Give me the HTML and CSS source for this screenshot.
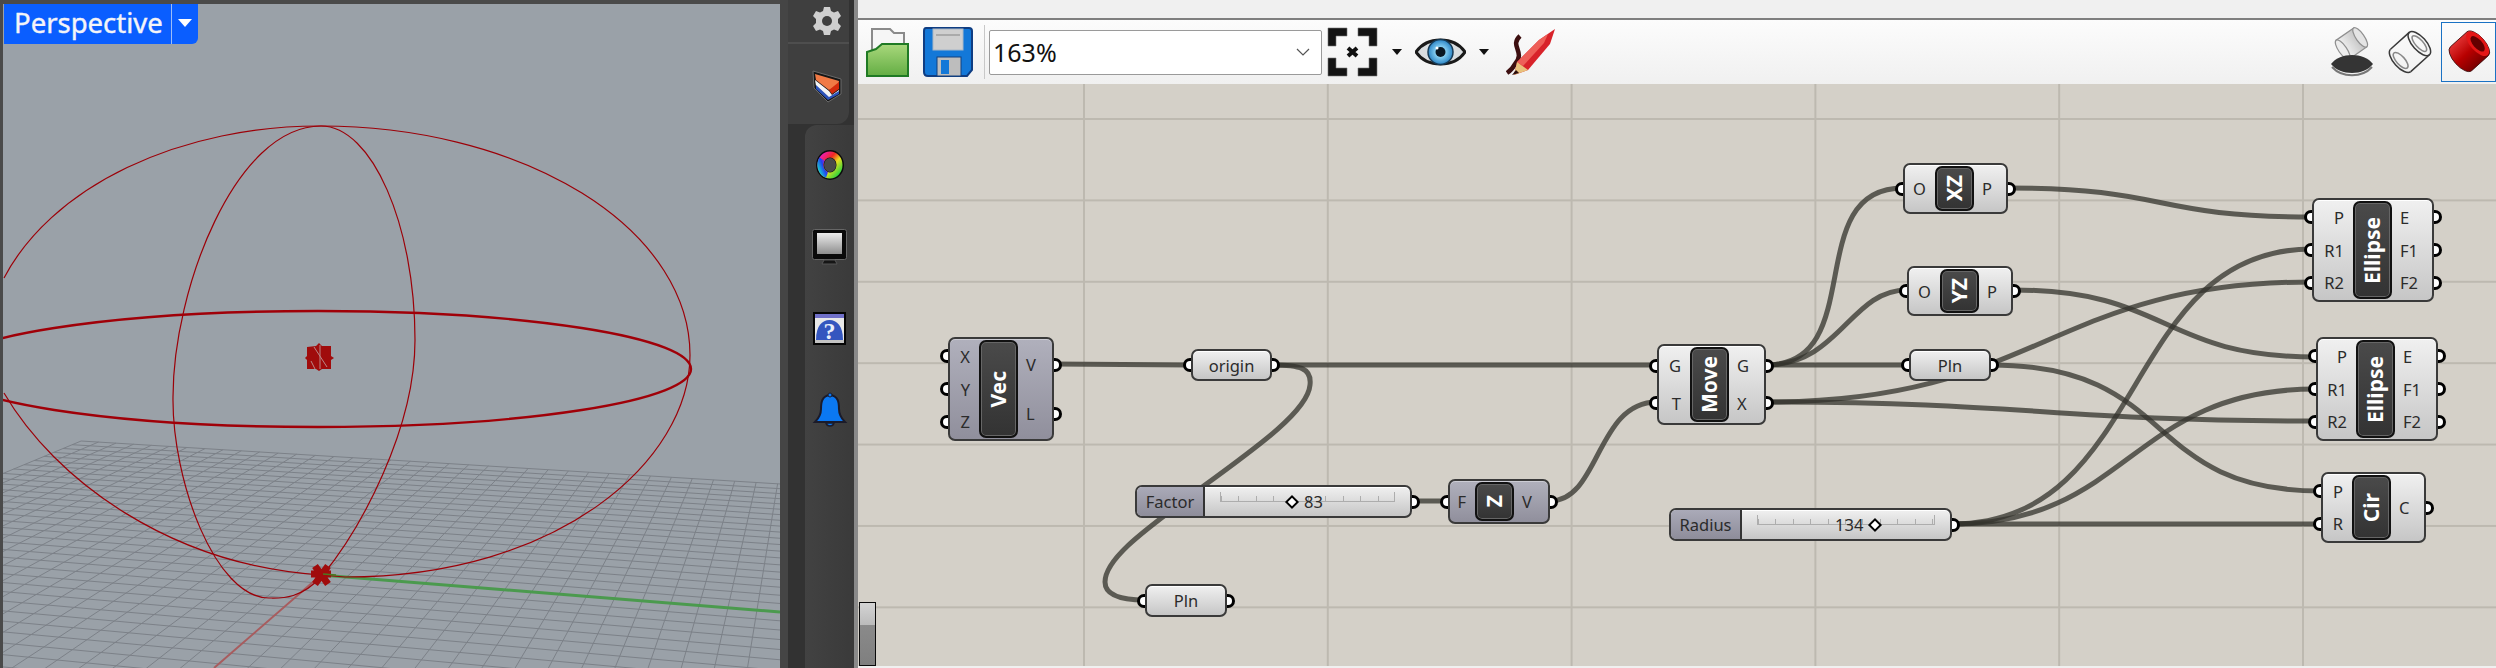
FILE: index.html
```html
<!DOCTYPE html>
<html lang="en">
<head>
  <meta charset="UTF-8" />
  <title>Perspective and canvas</title>
  <link rel="stylesheet" href="styles.css">
</head>
<body>
  <div class="app">

    <!-- rhino viewport -->
    <section class="viewport">
      <svg class="scene" viewBox="3 4 777 664" width="777" height="664">
        <g id="grid" class="grid-lines"></g>
        <line class="axis-x" x1="321" y1="575" x2="214" y2="668" />
        <line class="axis-y" x1="321" y1="575" x2="780" y2="612" />
        <g class="curve">
          <path d="M321 126 A369 229 0 0 1 690 355 C690 460 560 577 345 577 L321 575" />
          <path d="M321 126 A335 229 0 0 0 4 278" />
          <path d="M4 393 C55 480 170 565 321 575" />
          <path d="M321 126 C372 126 415 225 415 340 C415 430 360 530 322 576 C300 600 280 598 269 598 C215 598 172 480 173 397 C173 290 235 126 321 126 Z" />
        </g>
        <ellipse class="equator" cx="318" cy="369" rx="373" ry="58" />
        <path class="marker" d="M307 347 L316 346 L319 343 L322 346 L331 346 L331 356 L334 358 L331 360 L331 369 L322 369 L319 371 L316 369 L307 369 L307 360 L305 358 L307 356 Z" />
        <path class="marker-lines" d="M314 347 L327 367 M320 345 L320 369 M311 361 L315 369" />
        <path class="cross" d="M315 566 L328 584 M328 566 L315 584 M311 574 L331 574" />
        <line class="cross-tip" x1="323" y1="574" x2="336" y2="575" />
      </svg>
      <div class="view-tab">
        <span class="view-name">Perspective</span>
        <span class="view-drop"><i></i></span>
      </div>
    </section>

    <!-- dark side strip -->
    <aside class="strip">
      <div class="strip-top">
        <div class="strip-gear">
          <svg width="28" height="30" viewBox="0 0 28 30">
            <path fill="#cfcfcf" d="M11 1h6l1 4 3 1.500 4-1.500 3 5-3 3v4l3 3-3 5-4-1.500-3 1.500-1 4h-6l-1-4-3-1.500-4 1.500-3-5 3-3v-4l-3-3 3-5 4 1.500 3-1.500z" />
            <circle cx="14" cy="15" r="5" fill="#3f3f3f" />
          </svg>
        </div>
        <div class="strip-slot">
          <svg width="30" height="33" viewBox="0 0 30 33">
            <path fill="#161616" stroke="#6a6a6a" d="M1 1 L29 9 L29 24 L16 32 L2 18 Z" />
            <path fill="#f07a45" d="M3 4 L27 11 L26 16 L17 20 L4 10 Z" />
            <path fill="#d42a0c" d="M17 20 L27 12 L27 19 L20 24 Z" />
            <path fill="#f4f4f4" d="M3 10 L17 21 L20 25 L27 20 L27 22 L17 28 L4 16 Z" />
            <path fill="#2b52b8" d="M4 15 L17 27 L27 21 L27 24 L16 30 L4 19 Z" />
          </svg>
        </div>
      </div>
      <div class="strip-panel">
        <svg width="30" height="32" viewBox="0 0 30 32">
          <defs>
            <linearGradient id="wheelA" x1="0" y1="0" x2="1" y2="1">
              <stop offset="0" stop-color="#f01ac0" />
              <stop offset=".35" stop-color="#f02a20" />
              <stop offset=".6" stop-color="#e6e020" />
              <stop offset="1" stop-color="#18d040" />
            </linearGradient>
            <linearGradient id="wheelB" x1="0" y1="1" x2="1" y2="0">
              <stop offset="0" stop-color="#18d0d0" />
              <stop offset=".5" stop-color="#2040f0" />
              <stop offset="1" stop-color="#f01ac0" />
            </linearGradient>
          </defs>
          <ellipse cx="15" cy="16" rx="14" ry="15" fill="#0c0c0c" />
          <ellipse cx="15" cy="16" rx="9.500" ry="10.500" fill="none" stroke="url(#wheelA)" stroke-width="6" />
          <path d="M7 10 A 9.500 10.500 0 0 0 12 26" fill="none" stroke="url(#wheelB)" stroke-width="6" />
          <ellipse cx="15" cy="16" rx="6" ry="7" fill="#4a4a4a" />
        </svg>
        <svg width="35" height="36" viewBox="0 0 35 36">
          <defs>
            <linearGradient id="screenFill" x1="0" y1="0" x2="0" y2="1">
              <stop offset="0" stop-color="#ececec" />
              <stop offset="1" stop-color="#8e8e8e" />
            </linearGradient>
          </defs>
          <rect x=".5" y=".5" width="34" height="30" rx="2" fill="#0a0a0a" stroke="#666" />
          <rect x="5" y="4" width="25" height="21" fill="url(#screenFill)" />
          <path d="M12 31h11l2 4H10z" fill="#151515" stroke="#555" />
        </svg>
        <svg width="33" height="33" viewBox="0 0 33 33">
          <rect x="1" y="1" width="31" height="31" fill="#e8e8e8" stroke="#050505" stroke-width="2" />
          <rect x="2" y="2" width="29" height="4" fill="#7070c8" />
          <path d="M3 28 C3 14 9 8 16.500 8 C24 8 30 14 30 28 Z" fill="#3456bf" />
          <text class="help-mark" x="16.500" y="27">?</text>
          <rect x="2" y="28" width="29" height="3" fill="#c4c4c4" />
        </svg>
        <svg width="36" height="36" viewBox="0 0 36 36">
          <path fill="#0b78f2" stroke="#1b1b2a" stroke-width="2" d="M18 3 C10 4 9 10 9 17 C9 23 7 26 3 30 H33 C29 26 27 23 27 17 C27 10 26 4 18 3 Z" />
          <path fill="#0b78f2" stroke="#1b1b2a" stroke-width="1.500" d="M14 31 C15 35 21 35 22 31 Z" />
          <circle cx="18" cy="3" r="2" fill="#0b78f2" stroke="#1b1b2a" />
        </svg>
      </div>
    </aside>

    <!-- grasshopper window -->
    <main class="window">
      <div class="title-strip"></div>
      <div class="toolbar">
        <svg class="tool-open" width="43" height="50" viewBox="0 0 43 50">
          <defs>
            <linearGradient id="openGreen" x1="0" y1="0" x2="0" y2="1">
              <stop offset="0" stop-color="#a9d87c" />
              <stop offset="1" stop-color="#63ad43" />
            </linearGradient>
          </defs>
          <path d="M6 24 V2 H24 L28 6 H38 V24" fill="#f6f6f6" stroke="#8a8a8a" stroke-width="2" />
          <path d="M1 49 V25 L10 22 L16 17 H42 V49 Z" fill="url(#openGreen)" stroke="#1f7a24" stroke-width="2" />
        </svg>
        <svg class="tool-save" width="50" height="50" viewBox="0 0 50 50">
          <path d="M3 1 H46 Q49 1 49 4 V43 L44 49 H5 Q1 49 1 45 V4 Q1 1 3 1 Z" fill="#1378d8" stroke="#0f3d82" stroke-width="2" />
          <rect x="10" y="2" width="30" height="21" fill="#cfcfcf" stroke="#a9b7c6" />
          <rect x="13" y="7" width="24" height="2" fill="#aaa" />
          <rect x="14" y="30" width="24" height="19" fill="#bdbdbd" stroke="#12407f" />
          <rect x="18" y="33" width="8" height="14" fill="#1378d8" />
        </svg>
        <span class="tool-sep"></span>
        <div class="zoom-box">
          <span>163%</span>
          <svg width="14" height="8" viewBox="0 0 14 8"><path d="M1 1 L7 7 L13 1" fill="none" stroke="#555" stroke-width="1.200" /></svg>
        </div>
        <svg class="tool-focus" width="51" height="50" viewBox="0 0 51 50">
          <path d="M1 19 V1 H20 V9 H9 V19 Z M31 1 H50 V19 H42 V9 H31 Z M1 31 H9 V41 H20 V49 H1 Z M42 31 H50 V49 H31 V41 H42 Z" fill="#141414" stroke="#777" stroke-width=".6" />
          <path d="M21 21 L30 29 M30 21 L21 29" stroke="#111" stroke-width="4" />
        </svg>
        <i class="drop-arrow"></i>
        <svg class="tool-eye" width="51" height="32" viewBox="0 0 51 32">
          <defs>
            <radialGradient id="irisFill">
              <stop offset=".35" stop-color="#8fd6f6" />
              <stop offset="1" stop-color="#2a83c4" />
            </radialGradient>
          </defs>
          <path d="M1 16 C12 0 39 0 50 16 C39 32 12 32 1 16 Z" fill="#d9dde0" stroke="#1a1a1a" stroke-width="3" />
          <circle cx="25.500" cy="16" r="12.500" fill="url(#irisFill)" stroke="#173a55" stroke-width="1.500" />
          <circle cx="25.500" cy="16" r="5" fill="#0a1722" />
          <circle cx="22" cy="12" r="1.500" fill="#fff" />
        </svg>
        <i class="drop-arrow"></i>
        <svg class="tool-pencil" width="50" height="48" viewBox="0 0 50 48">
          <path d="M14 8 C3 18 20 24 9 36 C7 40 4 43 1 45" fill="none" stroke="#3d0f10" stroke-width="4.500" />
          <path d="M11 34 L33 12 L49 1 L44 16 L22 42 L8 47 Z" fill="#d8232a" />
          <path d="M11 34 L33 12 L42 6 L38 15 L17 38 Z" fill="#ee5f58" />
          <path d="M11 34 L22 42 L8 47 Z" fill="#e9c27c" />
          <path d="M10 42 L13 45 L6 47 Z" fill="#2a0d0d" />
        </svg>
        <span class="tool-gap"></span>
        <svg class="tool-ghost" width="44" height="50" viewBox="0 0 44 50">
          <defs>
            <linearGradient id="ghostFill" x1="0" y1="0" x2="1" y2="0">
              <stop offset="0" stop-color="#f4f4f4" />
              <stop offset="1" stop-color="#c0c0c0" />
            </linearGradient>
          </defs>
          <g transform="rotate(-35 22 16) translate(4 3) scale(.82)">
            <rect x="8" y="2" width="26" height="28" fill="url(#ghostFill)" stroke="#8f8f8f" stroke-width="1.500" />
            <ellipse cx="8" cy="16" rx="5" ry="14" fill="#ededed" stroke="#8f8f8f" stroke-width="1.500" />
            <ellipse cx="34" cy="16" rx="5" ry="14" fill="#e4e4e4" stroke="#8f8f8f" stroke-width="1.500" />
          </g>
          <path d="M1 37 C10 25 34 25 43 37 C34 49 10 49 1 37 Z" fill="#343434" />
          <path d="M2 40 C12 51 32 51 42 40" fill="none" stroke="#777" stroke-width="2" />
        </svg>
        <svg class="tool-wire" width="51" height="50" viewBox="0 0 51 50">
          <g transform="rotate(-42 25 25) translate(4 4) scale(.84)" fill="none" stroke="#3a3a3a" stroke-width="1.800">
            <path d="M10 7 H40 M10 43 H40" />
            <ellipse cx="40" cy="25" rx="8" ry="18" />
            <ellipse cx="40" cy="25" rx="4.500" ry="12" stroke="#888" />
            <path d="M10 7 A8 18 0 0 0 10 43" />
            <path d="M10 13 A5 12 0 0 1 10 37 A5 12 0 0 1 10 13" stroke="#888" />
          </g>
        </svg>
        <div class="tool-active">
          <svg width="50" height="50" viewBox="0 0 50 50">
            <defs>
              <linearGradient id="redFill" x1="0" y1="0" x2="0" y2="1">
                <stop offset="0" stop-color="#e03030" />
                <stop offset=".5" stop-color="#b80000" />
                <stop offset="1" stop-color="#7a0000" />
              </linearGradient>
            </defs>
            <g transform="rotate(-42 25 25) translate(5 4) scale(.8)">
              <path d="M11 5 H39 A9 20 0 0 1 39 45 H11 A9 20 0 0 1 11 5 Z" fill="url(#redFill)" stroke="#3a0a0a" stroke-width="1" />
              <ellipse cx="39" cy="25" rx="9" ry="19" fill="#e41616" />
              <ellipse cx="39" cy="25" rx="5.500" ry="12" fill="#640000" />
            </g>
          </svg>
        </div>
      </div>

      <div class="canvas">
        <svg class="wires" viewBox="858 84 1638 584" width="1638" height="584">
          <path d="M1054 364 L1191 365" />
          <path d="M1272 365 L1657 365" />
          <path d="M1272 365 C1300 365 1312 368 1310 385 C1308 410 1260 445 1205 485 C1160 520 1105 555 1105 582 C1105 597 1125 600 1145 600" />
          <path d="M1412 501 L1448 501" />
          <path d="M1550 501 C1600 501 1596 402 1657 402" />
          <path d="M1766 365 C1870 365 1800 188 1903 188" />
          <path d="M1766 365 C1840 365 1850 290 1907 290" />
          <path d="M1766 365 L1909 365" />
          <path d="M1766 402 C2040 402 2050 282 2312 282" />
          <path d="M1766 402 C2030 402 2050 421 2316 421" />
          <path d="M1991 365 C2180 365 2140 491 2321 491" />
          <path d="M2008 188 C2170 188 2150 217 2312 217" />
          <path d="M2013 290 C2170 290 2160 357 2316 357" />
          <path d="M1952 524 C2150 524 2120 249 2312 249" />
          <path d="M1952 524 C2130 524 2130 389 2316 389" />
          <path d="M1952 524 L2321 524" />
        </svg>

        <div class="node comp off n-vec">
          <div class="col in"><div class="row">X<i class="port l"></i></div><div class="row">Y<i class="port l"></i></div><div class="row">Z<i class="port l"></i></div></div>
          <div class="pill"><span>Vec</span></div>
          <div class="col out"><div class="row">V<i class="port r"></i></div><div class="row">L<i class="port r"></i></div></div>
        </div>

        <div class="node param n-origin"><i class="port l"></i>origin<i class="port r"></i></div>

        <div class="node slider n-factor">
          <div class="slider-name">Factor</div>
          <div class="track"><div class="rail"><div class="grip grip-factor"><i class="diamond"></i><span>83</span></div></div></div>
          <i class="port r"></i>
        </div>

        <div class="node comp off n-z">
          <div class="col in"><div class="row">F<i class="port l"></i></div></div>
          <div class="pill"><span>Z</span></div>
          <div class="col out"><div class="row">V<i class="port r"></i></div></div>
        </div>

        <div class="node param n-pln-low"><i class="port l"></i>Pln<i class="port r"></i></div>

        <div class="node comp n-move">
          <div class="col in"><div class="row">G<i class="port l"></i></div><div class="row">T<i class="port l"></i></div></div>
          <div class="pill"><span>Move</span></div>
          <div class="col out"><div class="row">G<i class="port r"></i></div><div class="row">X<i class="port r"></i></div></div>
        </div>

        <div class="node param n-pln-mid"><i class="port l"></i>Pln<i class="port r"></i></div>

        <div class="node comp n-xz">
          <div class="col in"><div class="row">O<i class="port l"></i></div></div>
          <div class="pill"><span>XZ</span></div>
          <div class="col out"><div class="row">P<i class="port r"></i></div></div>
        </div>

        <div class="node comp n-yz">
          <div class="col in"><div class="row">O<i class="port l"></i></div></div>
          <div class="pill"><span>YZ</span></div>
          <div class="col out"><div class="row">P<i class="port r"></i></div></div>
        </div>

        <div class="node comp n-ell-a">
          <div class="col in"><div class="row">P<i class="port l"></i></div><div class="row">R1<i class="port l"></i></div><div class="row">R2<i class="port l"></i></div></div>
          <div class="pill"><span>Ellipse</span></div>
          <div class="col out"><div class="row">E<i class="port r"></i></div><div class="row">F1<i class="port r"></i></div><div class="row">F2<i class="port r"></i></div></div>
        </div>

        <div class="node comp n-ell-b">
          <div class="col in"><div class="row">P<i class="port l"></i></div><div class="row">R1<i class="port l"></i></div><div class="row">R2<i class="port l"></i></div></div>
          <div class="pill"><span>Ellipse</span></div>
          <div class="col out"><div class="row">E<i class="port r"></i></div><div class="row">F1<i class="port r"></i></div><div class="row">F2<i class="port r"></i></div></div>
        </div>

        <div class="node slider n-radius">
          <div class="slider-name">Radius</div>
          <div class="track"><div class="rail"><div class="grip grip-radius"><span>134</span><i class="diamond"></i></div></div></div>
          <i class="port r"></i>
        </div>

        <div class="node comp n-cir">
          <div class="col in"><div class="row">P<i class="port l"></i></div><div class="row">R<i class="port l"></i></div></div>
          <div class="pill"><span>Cir</span></div>
          <div class="col out"><div class="row">C<i class="port r"></i></div></div>
        </div>

        <div class="scroll-thumb"></div>
      </div>
    </main>
  </div>
  <script src="grid.js"></script>
</body>
</html>
```

FILE: styles.css
```css
* { box-sizing: border-box; }
html, body { margin: 0; height: 100%; overflow: hidden; }
body { font-family: "Noto Sans", "Open Sans", sans-serif; background: #4a4a4a; color: #222; }

.app { display: grid; grid-template-columns: 780px 78px 1638px; width: 2496px; height: 668px; }

/* viewport */
.viewport { position: relative; background: #4a4a4a; padding: 4px 0 0 3px; }
.scene { display: block; background: #9aa1a8; }
.grid-lines line { stroke: #7c8188; stroke-width: 1; }
.axis-x { stroke: #a85c5e; stroke-width: 2; }
.axis-y { stroke: #4b9a4e; stroke-width: 3; }
.curve path { fill: none; stroke: #9c0008; stroke-width: 1.200; }
.equator { fill: none; stroke: #a00008; stroke-width: 2.400; }
.marker { fill: #a00c0c; }
.marker-lines { fill: none; stroke: #b98888; stroke-width: 1; }
.cross { fill: none; stroke: #a00c0c; stroke-width: 7; }
.cross-tip { stroke: #4a7a20; stroke-width: 1.500; }

.view-tab { position: absolute; left: 4px; top: 4px; width: 194px; height: 40px; display: flex; background: #0a5eff; color: #f4f4f8; border-radius: 0 0 6px 0; }
.view-name { width: 168px; padding-left: 10px; font-size: 27.500px; line-height: 37px; -webkit-text-stroke: .4px #f4f4f8; border-right: 1px solid #9dbdf8; }
.view-drop { flex: 1; display: flex; justify-content: center; padding-top: 15px; }
.view-drop i { width: 0; height: 0; border-left: 7px solid transparent; border-right: 7px solid transparent; border-top: 8px solid #fff; }

/* side strip */
.strip { background: #323232; border-left: 8px solid #454545; border-right: 4px solid #8a8a8a; display: flex; flex-direction: column; }
.strip-top { width: 61px; height: 124px; background: #3f3f3f; border-radius: 0 0 12px 0; display: flex; flex-direction: column; align-items: center; padding-left: 16px; flex: none; }
.strip-gear { height: 42px; display: flex; align-items: center; justify-content: center; width: 100%; }
.strip-slot { height: 82px; padding-top: 26px; border-top: 2px solid #4e4e4e; margin-left: -16px; padding-left: 16px; width: calc(100% + 16px); display: flex; justify-content: center; }
.strip-panel { flex: 1; margin-left: 17px; margin-top: 1px; background: linear-gradient(90deg, #424242, #3a3a3a); border-radius: 12px 0 0 0; display: flex; flex-direction: column; align-items: center; padding-top: 24px; gap: 45px; }
.strip-panel svg:nth-child(2) { margin-top: 3px; }
.strip-panel svg:nth-child(3) { margin-top: 2px; }
.strip-panel svg:nth-child(4) { margin-top: 2px; }
.help-mark { fill: #e8eefa; font-family: "Liberation Serif", serif; font-weight: 700; font-size: 24px; text-anchor: middle; }

/* grasshopper window */
.window { display: flex; flex-direction: column; min-width: 0; }
.title-strip { height: 20px; background: #f0f0f0; border-bottom: 2px solid #7f7f7f; flex: none; }
.toolbar { height: 64px; flex: none; display: flex; align-items: center; padding-left: 8px; background: linear-gradient(#fcfcfc, #f0f0f0); }
.tool-open { margin-right: 14px; }
.tool-save { margin-right: 11px; }
.tool-sep { width: 1px; height: 54px; background: #c8c8c8; margin-right: 4px; }
.zoom-box { width: 333px; height: 45px; background: #fff; border: 1px solid #9a9a9a; border-radius: 2px; display: flex; align-items: center; justify-content: space-between; padding: 0 11px 0 3px; font-size: 25px; color: #111; }
.tool-focus { margin-left: 5px; margin-right: 14px; }
.drop-arrow { width: 0; height: 0; border-left: 5px solid transparent; border-right: 5px solid transparent; border-top: 6px solid #111; margin-right: 13px; }
.tool-eye { margin-right: 13px; }
.tool-pencil { margin-left: 4px; }
.tool-gap { flex: 1; }
.tool-ghost { margin-right: 11px; }
.tool-wire { margin-right: 5px; }
.tool-active { width: 55px; height: 60px; border: 1px solid #1a72c4; padding: 4px 0 0 3px; }
.tool-active svg { display: block; }

/* canvas */
.canvas {
  position: relative;
  flex: 1;
  overflow: hidden;
  background-color: #d4d0c8;
  border-bottom: 2px solid #f0f0f0;
  background-image:
    linear-gradient(90deg, #bdb9b0 2px, transparent 2px),
    linear-gradient(#bdb9b0 2px, transparent 2px);
  background-size: 243.800px 100%, 100% 81.400px;
  background-position: 225px 0, 0 34px;
}
.wires { position: absolute; left: 0; top: 0; }
.wires path { fill: none; stroke: #33332c; stroke-width: 5; opacity: .75; }
.scroll-thumb { position: absolute; left: 1px; bottom: 0; width: 17px; height: 64px; border: 1px solid #0a0a0a; background: linear-gradient(#d4d4d4, #bbb 35%, #8a8a8a 36%, #7f7f7f); }

/* nodes */
.node { position: absolute; border: 2px solid #3a3a3a; border-radius: 7px; font-size: 16.500px; color: #2b2b2b; background: linear-gradient(#f0f0f0, #c6c6c6); box-shadow: inset 0 1px 0 #fff; }
.node.off { background: linear-gradient(#b0b0bc, #908f9c); box-shadow: inset 0 1px 0 #ccccd4; }
.comp { display: grid; grid-template-columns: var(--in) 39px 1fr; padding: 1px 0; }
.col { display: flex; flex-direction: column; }
.row { flex: 1; position: relative; display: flex; align-items: center; }
.in .row { justify-content: flex-end; padding-right: 9px; }
.out .row { padding-left: 8px; }
.pill { background: linear-gradient(#4a4a4a, #333); border: 2px solid #111; border-radius: 7px; box-shadow: inset 0 0 0 1px #666; display: flex; align-items: center; justify-content: center; color: #fff; font-weight: 700; font-size: 21px; }
.pill span { writing-mode: vertical-rl; transform: rotate(180deg); line-height: 1; }
.port { position: absolute; top: 50%; width: 8px; height: 14px; margin-top: -7px; background: #fff; border: 3px solid #000; }
.port.l { left: -10px; border-right: 0; border-radius: 7px 0 0 7px; }
.port.r { right: -10px; border-left: 0; border-radius: 0 7px 7px 0; }
.param { display: flex; align-items: center; justify-content: center; }

.slider { display: flex; }
.slider-name { background: linear-gradient(#aaaab8, #8e8d9a); border-right: 2px solid #333; border-radius: 5px 0 0 5px; display: flex; align-items: center; justify-content: center; flex: none; }
.track { flex: 1; display: flex; align-items: center; }
.rail { position: relative; height: 10px; margin-top: -10px; width: 100%; border: solid #adadad; border-width: 0 1px 1px; background: repeating-linear-gradient(90deg, #adadad 0 1px, transparent 1px 17.400px) 0 100% / 100% 5px no-repeat; }
.grip { position: absolute; top: 10px; height: 0; display: flex; align-items: center; gap: 7px; }
.grip-factor { left: 66px; }
.grip-radius { left: 77px; }
.diamond { width: 10px; height: 10px; background: #fff; border: 2.500px solid #000; transform: rotate(45deg); flex: none; }

/* placement on the canvas */
.n-vec { left: 90px; top: 253px; width: 106px; height: 104px; --in: 29px; }
.n-origin { left: 333px; top: 265px; width: 81px; height: 32px; }
.n-factor { left: 277px; top: 401px; width: 277px; height: 33px; }
.n-factor .slider-name { width: 68px; }
.n-factor .track { padding: 0 15px; }
.n-z { left: 590px; top: 395px; width: 102px; height: 45px; --in: 25px; }
.n-pln-low { left: 287px; top: 500px; width: 82px; height: 33px; }
.n-move { left: 799px; top: 260px; width: 109px; height: 81px; --in: 31px; }
.n-pln-mid { left: 1051px; top: 265px; width: 82px; height: 32px; }
.n-xz { left: 1045px; top: 79px; width: 105px; height: 51px; --in: 30px; }
.n-yz { left: 1049px; top: 182px; width: 106px; height: 50px; --in: 31px; }
.n-ell-a { left: 1454px; top: 114px; width: 122px; height: 104px; --in: 39px; }
.n-ell-b { left: 1458px; top: 253px; width: 122px; height: 104px; --in: 38px; }
.n-radius { left: 811px; top: 424px; width: 283px; height: 33px; }
.n-radius .slider-name { width: 71px; }
.n-radius .track { padding: 0 15px; }
.n-cir { left: 1463px; top: 388px; width: 105px; height: 71px; --in: 29px; }
```

FILE: grid.js
```js
// construction plane, drawn from its two vanishing points
var ox = 321, oy = 575;
var ax = -5921, ay = 72;
var bx = 836, by = 127;
var n = 20;
var a = -0.00408, b = 0.01655;

function project(u, v) {
  var m = u * a, k = v * b;
  var w = 1 + m + k;
  return [(ox + m * ax + k * bx) / w, (oy + m * ay + k * by) / w];
}

function addLine(g, p, q) {
  var line = document.createElementNS("http://www.w3.org/2000/svg", "line");
  line.setAttribute("x1", p[0].toFixed(1));
  line.setAttribute("y1", p[1].toFixed(1));
  line.setAttribute("x2", q[0].toFixed(1));
  line.setAttribute("y2", q[1].toFixed(1));
  g.appendChild(line);
}

var g = document.getElementById("grid");
for (var i = -n; i <= n; i++) {
  addLine(g, project(i, -n), project(i, n));
  addLine(g, project(-n, i), project(n, i));
}
```
